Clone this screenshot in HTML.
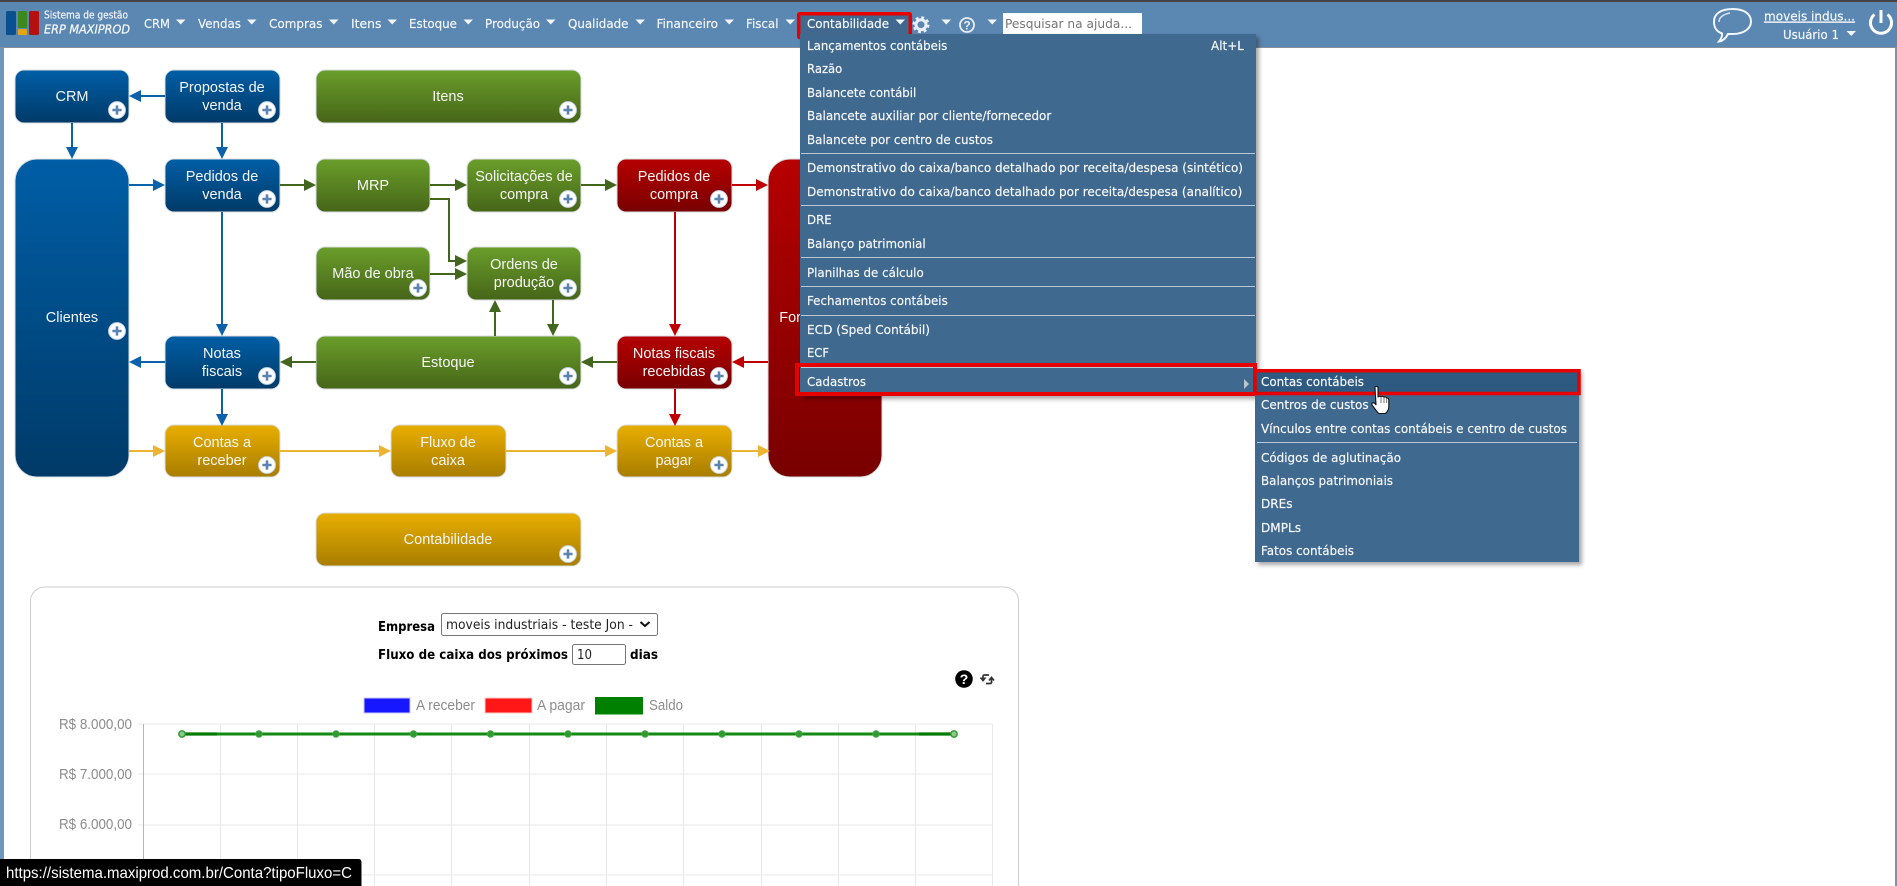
<!DOCTYPE html>
<html lang="pt-BR">
<head>
<meta charset="utf-8">
<title>Sistema de gestão ERP MAXIPROD</title>
<style>
html,body{margin:0;padding:0;background:#fff;width:1897px;height:886px;overflow:hidden}
svg{display:block;position:absolute;left:0;top:0}
text{white-space:pre}
.n{font:12.5px "DejaVu Sans",sans-serif;fill:#f4f6f9;stroke:#f4f6f9;stroke-width:.18}
.m{font:12.5px "DejaVu Sans",sans-serif;fill:#f6f8fa;stroke:#f6f8fa;stroke-width:.18}
.b{font:14.5px "Liberation Sans",Arial,sans-serif;fill:#f6f6f6;text-anchor:middle}
.p{font:bold 13px "DejaVu Sans",sans-serif;fill:#000}
.f{font:13px "DejaVu Sans",sans-serif;fill:#222}
.c{font:14.8px "Liberation Sans",Arial,sans-serif;fill:#8c8c8c}
.soft{filter:blur(.3px)}
</style>
</head>
<body>
<svg width="1897" height="886" viewBox="0 0 1897 886" xmlns="http://www.w3.org/2000/svg">
<defs>
<linearGradient id="gb" x1="0" y1="0" x2="0" y2="1"><stop offset="0" stop-color="#005ea6"/><stop offset="1" stop-color="#003a68"/></linearGradient>
<linearGradient id="gg" x1="0" y1="0" x2="0" y2="1"><stop offset="0" stop-color="#6a9e2a"/><stop offset="1" stop-color="#466518"/></linearGradient>
<linearGradient id="gr" x1="0" y1="0" x2="0" y2="1"><stop offset="0" stop-color="#b60000"/><stop offset="1" stop-color="#780000"/></linearGradient>
<linearGradient id="gy" x1="0" y1="0" x2="0" y2="1"><stop offset="0" stop-color="#e8ae00"/><stop offset="1" stop-color="#a87d00"/></linearGradient>
<filter id="sh" x="-5%" y="-5%" width="112%" height="112%"><feDropShadow dx="3" dy="3" stdDeviation="2" flood-color="#000" flood-opacity=".35"/></filter>
<g id="plus"><circle r="8.4" fill="#fff" stroke="#c9d6e6" stroke-width="1"/><path d="M-4.6 0H4.6M0-4.6V4.6" stroke="#5b84b1" stroke-width="2.6"/></g>
</defs>

<!-- page -->
<rect width="1897" height="886" fill="#fff"/>
<rect x="0" y="48" width="4" height="838" fill="#6f96bf"/>
<rect x="1895" y="48" width="2" height="838" fill="#6f96bf"/>

<g class="soft">
<!-- boxes -->
<g stroke="#d8dde2" stroke-width="1">
<rect x="15" y="70" width="114" height="53" rx="9" fill="url(#gb)"/>
<rect x="165" y="70" width="115" height="53" rx="9" fill="url(#gb)"/>
<rect x="316" y="70" width="265" height="53" rx="9" fill="url(#gg)"/>
<rect x="15" y="159" width="114" height="318" rx="22" fill="url(#gb)"/>
<rect x="165" y="159" width="115" height="53" rx="9" fill="url(#gb)"/>
<rect x="316" y="159" width="114" height="53" rx="9" fill="url(#gg)"/>
<rect x="467" y="159" width="114" height="53" rx="9" fill="url(#gg)"/>
<rect x="617" y="159" width="115" height="53" rx="9" fill="url(#gr)"/>
<rect x="768" y="159" width="114" height="318" rx="22" fill="url(#gr)"/>
<rect x="316" y="247" width="114" height="53" rx="9" fill="url(#gg)"/>
<rect x="467" y="247" width="114" height="53" rx="9" fill="url(#gg)"/>
<rect x="165" y="336" width="115" height="53" rx="9" fill="url(#gb)"/>
<rect x="316" y="336" width="265" height="53" rx="9" fill="url(#gg)"/>
<rect x="617" y="336" width="115" height="53" rx="9" fill="url(#gr)"/>
<rect x="165" y="425" width="115" height="52" rx="9" fill="url(#gy)"/>
<rect x="391" y="425" width="115" height="52" rx="9" fill="url(#gy)"/>
<rect x="617" y="425" width="115" height="52" rx="9" fill="url(#gy)"/>
<rect x="316" y="513" width="265" height="53" rx="9" fill="url(#gy)"/>
</g>

<!-- connectors -->
<g stroke-width="2" fill="none">
<g stroke="#0b62ab">
<path d="M165 96H138M72 123V150M222 123V150M129 185H156M222 212V327M165 362H138M222 389V416"/>
</g>
<g stroke="#42661e">
<path d="M280 185H307M430 185H458M581 185H608M430 199H449V261H458M430 274H458M495 336V309M553 300V327M316 362H289M617 362H590"/>
</g>
<g stroke="#c00000">
<path d="M732 185H759M675 212V327M768 362H741M675 389V416"/>
</g>
<g stroke="#edb434">
<path d="M129 451H156M280 451H382M506 451H608M732 451H759"/>
</g>
</g>
<g fill="#0b62ab">
<path d="M129 96l12-6v12zM72 159l-6-12h12zM222 159l-6-12h12zM165 185l-12-6v12zM222 336l-6-12h12zM129 362l12-6v12zM222 426l-6-12h12z"/>
</g>
<g fill="#42661e">
<path d="M316 185l-12-6v12zM467 185l-12-6v12zM617 185l-12-6v12zM467 261l-12-6v12zM467 274l-12-6v12zM495 300l-6 12h12zM553 336l-6-12h12zM280 362l12-6v12zM581 362l12-6v12z"/>
</g>
<g fill="#c00000">
<path d="M768 185l-12-6v12zM675 336l-6-12h12zM732 362l12-6v12zM675 426l-6-12h12z"/>
</g>
<g fill="#edb434">
<path d="M165 451l-12-6v12zM391 451l-12-6v12zM617 451l-12-6v12zM770 451l-12-6v12z"/>
</g>

<!-- labels -->
<g>
<text class="b" x="72" y="101">CRM</text>
<text class="b" x="222" y="92">Propostas de</text><text class="b" x="222" y="110">venda</text>
<text class="b" x="448" y="101">Itens</text>
<text class="b" x="72" y="322">Clientes</text>
<text class="b" x="222" y="181">Pedidos de</text><text class="b" x="222" y="199">venda</text>
<text class="b" x="373" y="190">MRP</text>
<text class="b" x="524" y="181">Solicitações de</text><text class="b" x="524" y="199">compra</text>
<text class="b" x="674" y="181">Pedidos de</text><text class="b" x="674" y="199">compra</text>
<text class="b" x="824" y="322">Fornecedores</text>
<text class="b" x="373" y="278">Mão de obra</text>
<text class="b" x="524" y="269">Ordens de</text><text class="b" x="524" y="287">produção</text>
<text class="b" x="222" y="358">Notas</text><text class="b" x="222" y="376">fiscais</text>
<text class="b" x="448" y="367">Estoque</text>
<text class="b" x="674" y="358">Notas fiscais</text><text class="b" x="674" y="376">recebidas</text>
<text class="b" x="222" y="447">Contas a</text><text class="b" x="222" y="465">receber</text>
<text class="b" x="448" y="447">Fluxo de</text><text class="b" x="448" y="465">caixa</text>
<text class="b" x="674" y="447">Contas a</text><text class="b" x="674" y="465">pagar</text>
<text class="b" x="448" y="544">Contabilidade</text>
</g>
<use href="#plus" x="117" y="110"/><use href="#plus" x="267" y="110"/><use href="#plus" x="568" y="110"/>
<use href="#plus" x="117" y="331"/><use href="#plus" x="267" y="199"/><use href="#plus" x="568" y="199"/>
<use href="#plus" x="719" y="199"/><use href="#plus" x="418" y="288"/><use href="#plus" x="568" y="288"/>
<use href="#plus" x="267" y="376"/><use href="#plus" x="568" y="376"/><use href="#plus" x="719" y="376"/>
<use href="#plus" x="267" y="465"/><use href="#plus" x="719" y="465"/><use href="#plus" x="568" y="554"/>
</g>

<!-- chart panel -->
<path d="M30.5 886V601a14 14 0 0 1 14-14H1004.5a14 14 0 0 1 14 14V886" fill="#fff" stroke="#cfcfcf"/>
<text class="p" x="378" y="631" textLength="57" lengthAdjust="spacingAndGlyphs">Empresa</text>
<rect x="441.5" y="613.5" width="216" height="22" rx="2" fill="#fff" stroke="#767676"/>
<text class="f" x="446" y="629" textLength="187" lengthAdjust="spacingAndGlyphs">moveis industriais - teste Jon -</text>
<path d="M640.5 622l4.5 4 4.5-4" fill="none" stroke="#111" stroke-width="2"/>
<text class="p" x="378" y="659" textLength="190" lengthAdjust="spacingAndGlyphs">Fluxo de caixa dos próximos</text>
<rect x="572.5" y="644.5" width="53" height="20" rx="2" fill="#fff" stroke="#767676"/>
<text class="f" x="577" y="659" textLength="15" lengthAdjust="spacingAndGlyphs">10</text>
<text class="p" x="630" y="659" textLength="28" lengthAdjust="spacingAndGlyphs">dias</text>
<circle cx="964" cy="679" r="8.8" fill="#000"/>
<text x="964" y="684" text-anchor="middle" style="font:bold 14px 'Liberation Sans',sans-serif;fill:#fff">?</text>
<path d="M989 675H984.500C983.500 675 983 675.500 983 676.500V679.500M980.500 677.500L983 680.500 985.500 677.500M986 683.500H990C991 683.500 991.500 683 991.500 682V678.500M989 680.500L991.500 677.500 994 680.500" fill="none" stroke="#333" stroke-width="1.700"/>

<rect x="364" y="698" width="46" height="15" fill="#1717ff" stroke="#c8c8ff"/>
<text class="c" x="416" y="710" textLength="59" lengthAdjust="spacingAndGlyphs">A receber</text>
<rect x="485" y="698" width="47" height="15" fill="#ff1717" stroke="#ffc8c8"/>
<text class="c" x="537" y="710" textLength="48" lengthAdjust="spacingAndGlyphs">A pagar</text>
<rect x="595" y="697" width="48" height="17.500" fill="#008000"/>
<text class="c" x="649" y="710" textLength="34" lengthAdjust="spacingAndGlyphs">Saldo</text>

<g stroke="#e8e8e8" stroke-width="1" fill="none">
<path d="M138 724H992.500M138 774H992.500M138 825H992.500M138 875H992.500"/>
<path d="M220.500 724V886M297.500 724V886M374.500 724V886M451.500 724V886M529.500 724V886M606.500 724V886M683.500 724V886M761.500 724V886M838.500 724V886M915.500 724V886M992.500 724V886"/>
</g>
<path d="M143.500 724V886" stroke="#b5b5b5" fill="none"/>
<text class="c" x="59" y="729" textLength="73" lengthAdjust="spacingAndGlyphs">R$ 8.000,00</text>
<text class="c" x="59" y="779" textLength="73" lengthAdjust="spacingAndGlyphs">R$ 7.000,00</text>
<text class="c" x="59" y="829" textLength="73" lengthAdjust="spacingAndGlyphs">R$ 6.000,00</text>
<path d="M182 734H954" stroke="#118a11" stroke-width="3"/>
<path d="M182 734H217M919 734H954" stroke="#007a00" stroke-width="3.200"/>
<g fill="#2f9a2f" stroke="#3ea53e">
<circle cx="259" cy="734" r="3.200"/><circle cx="336" cy="734" r="3.200"/><circle cx="413.500" cy="734" r="3.200"/><circle cx="490.500" cy="734" r="3.200"/><circle cx="568" cy="734" r="3.200"/><circle cx="645" cy="734" r="3.200"/><circle cx="722" cy="734" r="3.200"/><circle cx="799" cy="734" r="3.200"/><circle cx="876" cy="734" r="3.200"/>
</g>
<circle cx="182" cy="734" r="3.200" fill="#8cc88c" stroke="#2f9a2f" stroke-width="1.400"/>
<circle cx="954" cy="734" r="3.200" fill="#8cc88c" stroke="#2f9a2f" stroke-width="1.400"/>

<!-- status bubble -->
<path d="M0 859H358a3 3 0 0 1 3.500 3V886H0z" fill="#000"/>
<text x="6" y="878" textLength="346" lengthAdjust="spacingAndGlyphs" style="font:16px 'Liberation Sans',sans-serif;fill:#fff">https://sistema.maxiprod.com.br/Conta?tipoFluxo=C</text>

<!-- top bar -->
<rect width="1897" height="47" fill="#5b87b3"/>
<rect width="1897" height="2" fill="#444"/>
<rect y="47" width="1897" height="1" fill="#8a9099"/>
<g class="soft">
<rect x="6" y="11" width="10" height="24" rx="1.500" fill="#0a4f8e"/>
<rect x="18" y="11" width="9" height="17" rx="1" fill="#3c8a1e"/>
<rect x="18" y="29" width="9" height="6" rx="1" fill="#e2a612"/>
<rect x="29" y="11" width="10" height="24" rx="1.500" fill="#b50f0f"/>
<text x="44" y="18.500" textLength="84" lengthAdjust="spacingAndGlyphs" style="font:10.500px 'DejaVu Sans',sans-serif;fill:#eef2f6;stroke:#eef2f6;stroke-width:.25">Sistema de gestão</text>
<text x="44" y="33.500" textLength="86" lengthAdjust="spacingAndGlyphs" style="font:italic 12.500px 'DejaVu Sans',sans-serif;fill:#f2f5f8;stroke:#f2f5f8;stroke-width:.3">ERP MAXIPROD</text>
</g>

<g>
<text class="n" x="144" y="28" textLength="26" lengthAdjust="spacingAndGlyphs">CRM</text>
<text class="n" x="198" y="28" textLength="43" lengthAdjust="spacingAndGlyphs">Vendas</text>
<text class="n" x="269" y="28" textLength="53.500" lengthAdjust="spacingAndGlyphs">Compras</text>
<text class="n" x="351" y="28" textLength="30.500" lengthAdjust="spacingAndGlyphs">Itens</text>
<text class="n" x="409" y="28" textLength="48" lengthAdjust="spacingAndGlyphs">Estoque</text>
<text class="n" x="485" y="28" textLength="55" lengthAdjust="spacingAndGlyphs">Produção</text>
<text class="n" x="568" y="28" textLength="60.500" lengthAdjust="spacingAndGlyphs">Qualidade</text>
<text class="n" x="656.500" y="28" textLength="61.500" lengthAdjust="spacingAndGlyphs">Financeiro</text>
<text class="n" x="746" y="28" textLength="32.500" lengthAdjust="spacingAndGlyphs">Fiscal</text>
</g>
<g fill="#f1f4f8">
<path d="M176 19.500h9.500l-4.750 5zM247 19.500h9.500l-4.750 5zM329 19.500h9.500l-4.750 5zM387.500 19.500h9.500l-4.750 5zM463.500 19.500h9.500l-4.750 5zM546 19.500h9.500l-4.750 5zM635.500 19.500h9.500l-4.750 5zM724.500 19.500h9.500l-4.750 5zM785.500 19.500h9.500l-4.750 5z"/>
<path d="M941.500 19.500h9.500l-4.750 5zM987.500 19.500h9.500l-4.750 5z"/>
</g>
<!-- gear -->
<g fill="none" stroke="#e9eef4">
<circle cx="921" cy="24.700" r="5" stroke-width="3"/>
<circle cx="921" cy="24.700" r="7" stroke-width="3" stroke-dasharray="2.800 2.700"/>
</g>
<!-- help -->
<circle cx="967" cy="25" r="7" fill="none" stroke="#e9eef4" stroke-width="1.800"/>
<text x="967" y="29.500" text-anchor="middle" style="font:bold 12px 'Liberation Sans',sans-serif;fill:#e9eef4">?</text>
<!-- search -->
<rect x="1003" y="13" width="139" height="23" fill="#fff"/>
<text x="1005" y="28" textLength="127" lengthAdjust="spacingAndGlyphs" style="font:12.500px 'DejaVu Sans',sans-serif;fill:#757575">Pesquisar na ajuda...</text>

<!-- right side -->
<path d="M1722 33.500C1715 31 1714 26 1714 21.500C1714 13 1722 9 1733 9C1744 9 1751 14 1751 21.500C1751 29 1743 34 1733 34C1731 34 1730 34 1728 34C1726 38 1723 41 1719 41.500C1721 39 1722.500 36 1722 33.500Z" fill="none" stroke="#f3f6f9" stroke-width="2"/>
<path d="M1719 22C1719 17 1724 14 1730 13" fill="none" stroke="#dbe4ee" stroke-width="1.500"/>
<text x="1764" y="20.500" textLength="91" lengthAdjust="spacingAndGlyphs" text-decoration="underline" style="font:12.500px 'DejaVu Sans',sans-serif;fill:#f6f8fa;stroke:#f6f8fa;stroke-width:.18">moveis indus...</text>
<text x="1783" y="39" textLength="56" lengthAdjust="spacingAndGlyphs" style="font:12.500px 'DejaVu Sans',sans-serif;fill:#f6f8fa;stroke:#f6f8fa;stroke-width:.18">Usuário 1</text>
<path d="M1846.500 31h9.500l-4.750 5z" fill="#f1f4f8"/>
<path d="M1874.500 14.500a10.500 10.500 0 1 0 13 0" fill="none" stroke="#fff" stroke-width="3"/>
<path d="M1881 10V23" stroke="#fff" stroke-width="3" fill="none"/>

<!-- active menu button -->
<rect x="798.700" y="13.700" width="111.600" height="23.800" rx="1" fill="#41698f" stroke="#e60000" stroke-width="3.500"/>
<text class="m" x="807" y="28" textLength="82" lengthAdjust="spacingAndGlyphs">Contabilidade</text>
<path d="M895.500 19.500h9.500l-4.750 5z" fill="#f1f4f8"/>

<!-- main dropdown -->
<rect x="800" y="34" width="456" height="362" fill="#41698f" filter="url(#sh)"/>
<g stroke="#b9c9d8" stroke-width="1">
<path d="M801 153.500H1255M801 205.500H1255M801 257.500H1255M801 286.500H1255M801 315.500H1255M801 367.500H1255"/>
</g>
<g>
<text class="m" x="807" y="50" textLength="140.300" lengthAdjust="spacingAndGlyphs">Lançamentos contábeis</text>
<text class="m" x="1211" y="50" textLength="33" lengthAdjust="spacingAndGlyphs">Alt+L</text>
<text class="m" x="807" y="73" textLength="35.300" lengthAdjust="spacingAndGlyphs">Razão</text>
<text class="m" x="807" y="97" textLength="109.300" lengthAdjust="spacingAndGlyphs">Balancete contábil</text>
<text class="m" x="807" y="120" textLength="244.300" lengthAdjust="spacingAndGlyphs">Balancete auxiliar por cliente/fornecedor</text>
<text class="m" x="807" y="144" textLength="186" lengthAdjust="spacingAndGlyphs">Balancete por centro de custos</text>
<text class="m" x="807" y="172" textLength="436" lengthAdjust="spacingAndGlyphs">Demonstrativo do caixa/banco detalhado por receita/despesa (sintético)</text>
<text class="m" x="807" y="196" textLength="435.300" lengthAdjust="spacingAndGlyphs">Demonstrativo do caixa/banco detalhado por receita/despesa (analítico)</text>
<text class="m" x="807" y="224" textLength="24.700" lengthAdjust="spacingAndGlyphs">DRE</text>
<text class="m" x="807" y="248" textLength="118.700" lengthAdjust="spacingAndGlyphs">Balanço patrimonial</text>
<text class="m" x="807" y="277" textLength="116.700" lengthAdjust="spacingAndGlyphs">Planilhas de cálculo</text>
<text class="m" x="807" y="305" textLength="140.800" lengthAdjust="spacingAndGlyphs">Fechamentos contábeis</text>
<text class="m" x="807" y="334" textLength="123" lengthAdjust="spacingAndGlyphs">ECD (Sped Contábil)</text>
<text class="m" x="807" y="357" textLength="22" lengthAdjust="spacingAndGlyphs">ECF</text>
<text class="m" x="807" y="386" textLength="59" lengthAdjust="spacingAndGlyphs">Cadastros</text>
</g>
<path d="M1244 379l5 5-5 5z" fill="#b8c4d0"/>
<rect x="797" y="365" width="458" height="29" fill="none" stroke="#e60000" stroke-width="4"/>

<!-- submenu -->
<rect x="1255" y="369" width="324" height="193" fill="#41698f" filter="url(#sh)"/>
<rect x="1256" y="372" width="322" height="20" fill="#2e5a82"/>
<path d="M1257 442.500H1577" stroke="#b9c9d8" fill="none"/>
<g>
<text class="m" x="1261" y="386" textLength="103" lengthAdjust="spacingAndGlyphs">Contas contábeis</text>
<text class="m" x="1261" y="409" textLength="107.600" lengthAdjust="spacingAndGlyphs">Centros de custos</text>
<text class="m" x="1261" y="433" textLength="306" lengthAdjust="spacingAndGlyphs">Vínculos entre contas contábeis e centro de custos</text>
<text class="m" x="1261" y="462" textLength="140" lengthAdjust="spacingAndGlyphs">Códigos de aglutinação</text>
<text class="m" x="1261" y="485" textLength="132" lengthAdjust="spacingAndGlyphs">Balanços patrimoniais</text>
<text class="m" x="1261" y="508" textLength="31.600" lengthAdjust="spacingAndGlyphs">DREs</text>
<text class="m" x="1261" y="532" textLength="40" lengthAdjust="spacingAndGlyphs">DMPLs</text>
<text class="m" x="1261" y="555" textLength="93" lengthAdjust="spacingAndGlyphs">Fatos contábeis</text>
</g>
<rect x="1255" y="370.750" width="324" height="22.750" fill="none" stroke="#e60000" stroke-width="3.500"/>

<!-- hand cursor -->
<path d="M1375 387.500c0-1.500 3-1.500 3 0V397c1-1 2.500-1 3 0 .8-1 2.500-.8 3 .3 1-.8 2.500-.3 2.700 .9 1.100-.3 2.100 .3 2.100 1.500V407c0 3-2 5.500-3.500 6.500h-6.500c-1.800-1.500-4-5-6.800-8.500-1-1.500 1-3 2.500-1.800l1.500 1.500z" fill="#fff" stroke="#111" stroke-width="1.100" stroke-linejoin="round"/>
<path d="M1381 398v5M1384 398v5M1386.700 399v4" stroke="#555" stroke-width=".8" fill="none"/>
</svg>
</body>
</html>
